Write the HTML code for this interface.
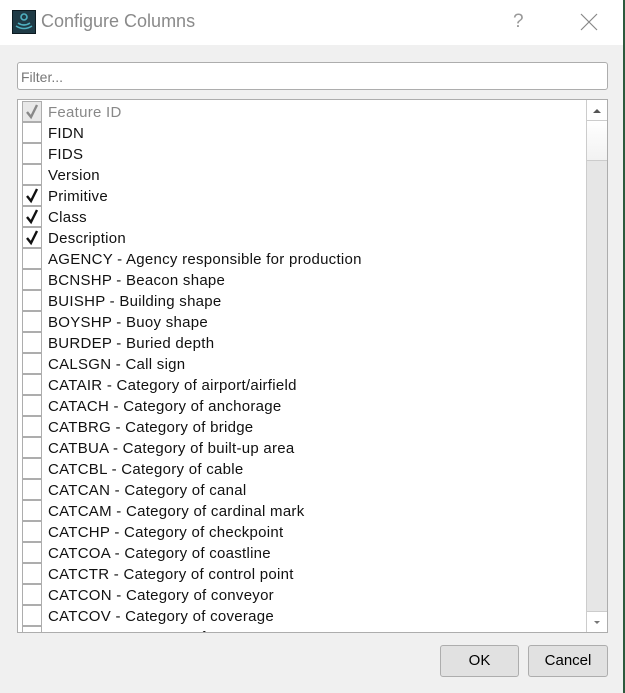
<!DOCTYPE html>
<html><head><style>
*{box-sizing:border-box;margin:0;padding:0}
body{width:625px;height:693px;overflow:hidden;background:#f0f0f0;font-family:"Liberation Sans",sans-serif;position:relative}
.title{position:absolute;left:0;top:0;width:625px;height:45px;background:#fff}
.icon{position:absolute;left:12px;top:10px;width:24px;height:24px;background:#1f3b46;border:1px solid #0c1a20}
.ttl{position:absolute;left:41px;top:11px;font-size:18px;color:#8a8a8a}
.q{position:absolute;left:513px;top:11px;font-size:19px;color:#999}
.x{position:absolute;left:580px;top:13px}
.filter{position:absolute;left:17px;top:62px;width:591px;height:28px;background:#fff;border:1px solid #adadad;border-radius:3px;font-size:14px;color:#777;padding:6px 3px}
.list{position:absolute;left:17px;top:99px;width:591px;height:534px;background:#fff;border:1px solid #adadad;overflow:hidden}
.row{position:absolute;left:0;height:21px;width:565px}
.cb{position:absolute;left:4px;top:0;width:20px;height:21px;border:1px solid #adadad;background:#fff}
.cb.dis{background:#e8e8e8}
.lbl{position:absolute;left:30px;top:3px;font-size:15px;letter-spacing:0.27px;color:#111;white-space:nowrap}
.sb{position:absolute;left:568px;top:0;width:21px;height:532px;background:#e6e6e6;border-left:1px solid #ccc}
.sbtn{position:absolute;left:0;width:20px;height:21px;background:#fff;border-bottom:1px solid #ccc}
.thumb{position:absolute;left:0;top:21px;width:20px;height:40px;background:linear-gradient(#fff,#f2f2f2);border-bottom:1px solid #ccc}
.btn{position:absolute;top:645px;height:32px;background:#e1e1e1;border:1px solid #adadad;border-radius:3px;font-size:15px;text-align:center;line-height:30px;color:#000}
</style></head><body>
<div class="title">
<div class="icon"><svg width="22" height="22" viewBox="0 0 22 22"><circle cx="11" cy="6" r="3" fill="none" stroke="#4fb0c0" stroke-width="1.6"/><path d="M5 12 Q11 16 17 12 M3 15 Q11 20 19 15" fill="none" stroke="#4fb0c0" stroke-width="1.6"/></svg></div>
<div class="ttl">Configure Columns</div>
<div class="q">?</div>
<svg class="x" width="18" height="18"><path d="M1 1L17 17M17 1L1 17" stroke="#888" stroke-width="1.2"/></svg>
</div>
<div style="position:absolute;right:0;top:0;width:2px;height:693px;background:#2d5a3d"></div>
<div class="filter">Filter...</div>
<div class="list">
<div class="sb"><div class="sbtn" style="top:0"><svg width="20" height="21"><path d="M6 13L10 9L14 13Z" fill="#555"/></svg></div><div class="thumb"></div><div class="sbtn" style="top:511px;border-top:1px solid #ccc;border-bottom:0"><svg width="20" height="21"><path d="M7 9L10 12L13 9Z" fill="#777"/></svg></div></div>
<div id="rows"></div>
</div>
<div class="btn" style="left:440px;width:79px">OK</div>
<div class="btn" style="left:528px;width:80px">Cancel</div>
<script>
var items=[["Feature ID",2],["FIDN",0],["FIDS",0],["Version",0],["Primitive",1],["Class",1],["Description",1],["AGENCY - Agency responsible for production",0],["BCNSHP - Beacon shape",0],["BUISHP - Building shape",0],["BOYSHP - Buoy shape",0],["BURDEP - Buried depth",0],["CALSGN - Call sign",0],["CATAIR - Category of airport/airfield",0],["CATACH - Category of anchorage",0],["CATBRG - Category of bridge",0],["CATBUA - Category of built-up area",0],["CATCBL - Category of cable",0],["CATCAN - Category of canal",0],["CATCAM - Category of cardinal mark",0],["CATCHP - Category of checkpoint",0],["CATCOA - Category of coastline",0],["CATCTR - Category of control point",0],["CATCON - Category of conveyor",0],["CATCOV - Category of coverage",0],["CATCRN - Category of crane",0]];
var h="";items.forEach(function(it,i){var c=it[1]?'<svg width="18" height="19" style="position:absolute;left:0;top:0"><path d="M4 10L8 15L14 3" fill="none" stroke="'+(it[1]==2?'#888':'#111')+'" stroke-width="2.4"/></svg>':'';
h+='<div class="row" style="top:'+(1+i*21)+'px"><div class="cb'+(it[1]==2?' dis':'')+'">'+c+'</div><div class="lbl" style="color:'+(it[1]==2?'#888':'#111')+'">'+it[0]+'</div></div>';});
document.getElementById("rows").innerHTML=h;
</script>
</body></html>
